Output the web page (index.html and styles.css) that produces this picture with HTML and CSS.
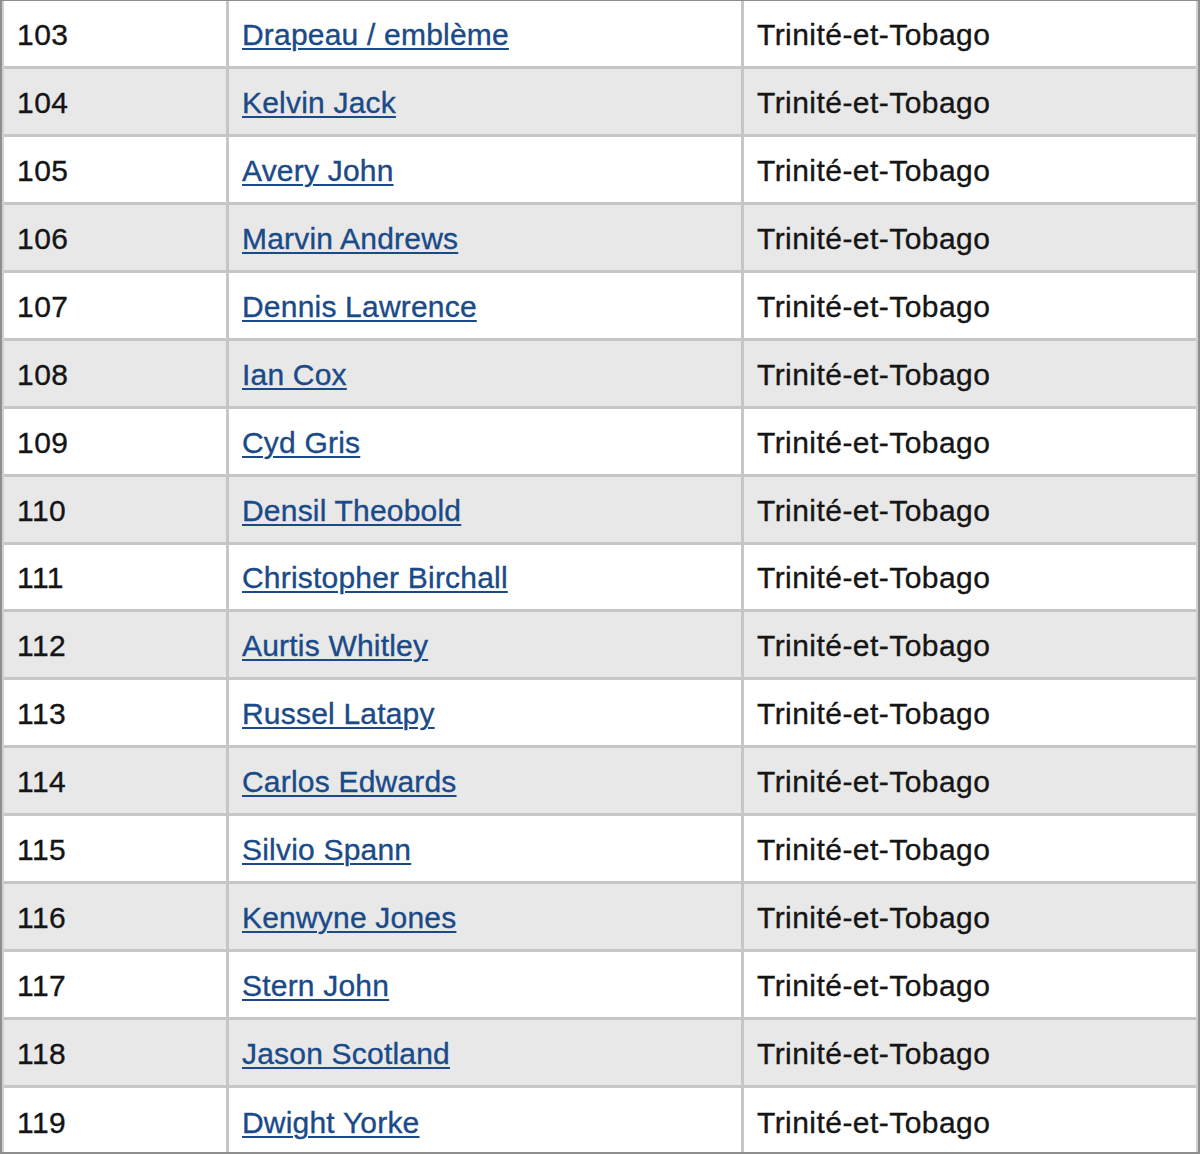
FILE: index.html
```html
<!DOCTYPE html>
<html lang="fr">
<head>
<meta charset="utf-8">
<title>Trinité-et-Tobago</title>
<link rel="stylesheet" href="styles.css">
</head>
<body>
<div class="frame">
<table class="list">
<colgroup><col class="c-num"><col class="c-name"><col class="c-country"></colgroup>
<tbody>
<tr><td>103</td><td><a href="#">Drapeau / emblème</a></td><td>Trinité-et-Tobago</td></tr>
<tr><td>104</td><td><a href="#">Kelvin Jack</a></td><td>Trinité-et-Tobago</td></tr>
<tr><td>105</td><td><a href="#">Avery John</a></td><td>Trinité-et-Tobago</td></tr>
<tr><td>106</td><td><a href="#">Marvin Andrews</a></td><td>Trinité-et-Tobago</td></tr>
<tr><td>107</td><td><a href="#">Dennis Lawrence</a></td><td>Trinité-et-Tobago</td></tr>
<tr><td>108</td><td><a href="#">Ian Cox</a></td><td>Trinité-et-Tobago</td></tr>
<tr><td>109</td><td><a href="#">Cyd Gris</a></td><td>Trinité-et-Tobago</td></tr>
<tr><td>110</td><td><a href="#">Densil Theobold</a></td><td>Trinité-et-Tobago</td></tr>
<tr><td>111</td><td><a href="#">Christopher Birchall</a></td><td>Trinité-et-Tobago</td></tr>
<tr><td>112</td><td><a href="#">Aurtis Whitley</a></td><td>Trinité-et-Tobago</td></tr>
<tr><td>113</td><td><a href="#">Russel Latapy</a></td><td>Trinité-et-Tobago</td></tr>
<tr><td>114</td><td><a href="#">Carlos Edwards</a></td><td>Trinité-et-Tobago</td></tr>
<tr><td>115</td><td><a href="#">Silvio Spann</a></td><td>Trinité-et-Tobago</td></tr>
<tr><td>116</td><td><a href="#">Kenwyne Jones</a></td><td>Trinité-et-Tobago</td></tr>
<tr><td>117</td><td><a href="#">Stern John</a></td><td>Trinité-et-Tobago</td></tr>
<tr><td>118</td><td><a href="#">Jason Scotland</a></td><td>Trinité-et-Tobago</td></tr>
<tr><td>119</td><td><a href="#">Dwight Yorke</a></td><td>Trinité-et-Tobago</td></tr>
</tbody>
</table>
</div>
</body>
</html>
```
FILE: styles.css
```css
html, body {
  margin: 0;
  padding: 0;
  background: #ffffff;
}

.frame {
  width: 1200px;
  height: 1154px;
  box-sizing: border-box;
  border: 2px solid #8e8e8e;
  border-top-width: 1px;
  overflow: hidden;
}

.list {
  width: 100%;
  border-collapse: separate;
  border-spacing: 0;
  table-layout: fixed;
  border-left: 2px solid #d0d0d0;
  border-right: 2px solid #d0d0d0;
  font-family: "Liberation Sans", Arial, sans-serif;
  font-size: 30px;
  letter-spacing: 0.45px;
  color: #151515;
  -webkit-text-stroke: 0.35px currentColor;
}

.c-num { width: 222px; }
.c-name { width: 515px; }

.list td {
  height: 67.95px;
  box-sizing: border-box;
  padding: 3px 0 0 13px;
  vertical-align: middle;
  border-bottom: 3px solid #c6c6c6;
  white-space: nowrap;
  line-height: 1;
}

.list tr:last-child td {
  border-bottom: none;
}

.list td + td {
  border-left: 3px solid #c6c6c6;
}

.list tr:nth-child(even) td {
  background: #e8e8e8;
}

.list a {
  color: #1a4a88;
  letter-spacing: 0.2px;
  text-decoration: underline;
  text-decoration-thickness: 2px;
  text-underline-offset: 3px;
}
```
